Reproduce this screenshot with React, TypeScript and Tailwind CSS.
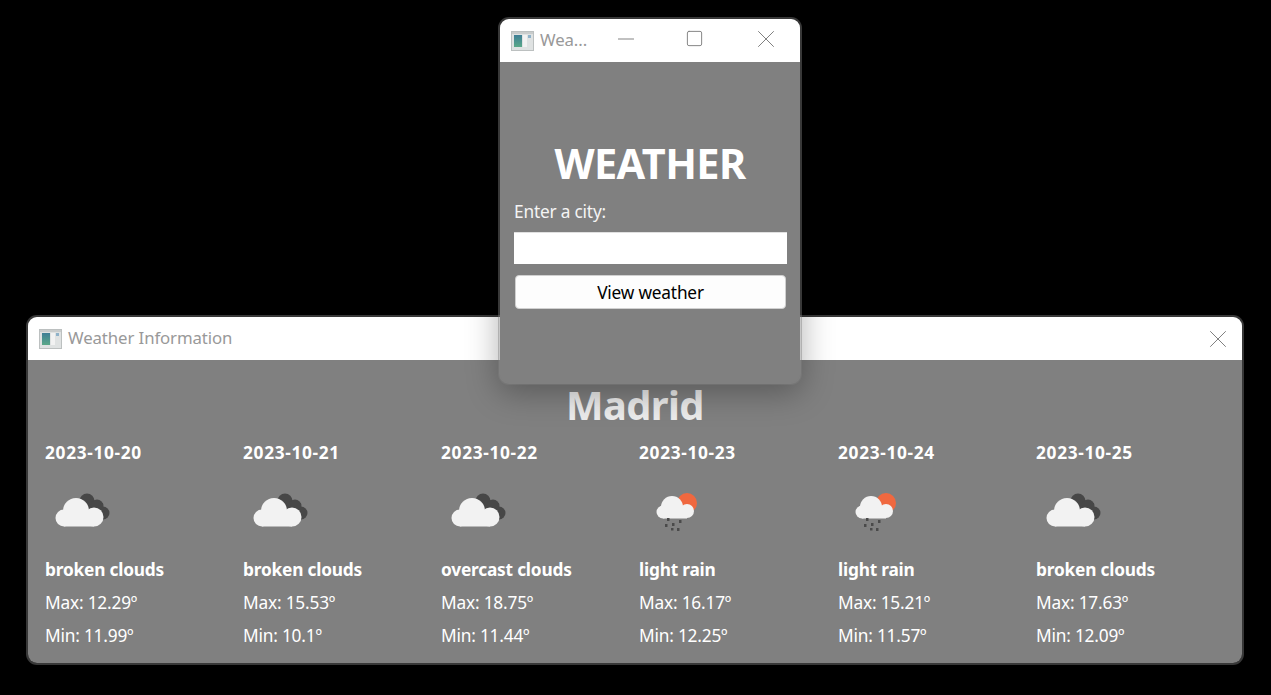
import { X, Minus, Square } from "lucide-react";

const days = [
  { date: "2023-10-20", desc: "broken clouds", max: "12.29", min: "11.99", icon: "clouds" },
  { date: "2023-10-21", desc: "broken clouds", max: "15.53", min: "10.1", icon: "clouds" },
  { date: "2023-10-22", desc: "overcast clouds", max: "18.75", min: "11.44", icon: "clouds" },
  { date: "2023-10-23", desc: "light rain", max: "16.17", min: "12.25", icon: "rain" },
  { date: "2023-10-24", desc: "light rain", max: "15.21", min: "11.57", icon: "rain" },
  { date: "2023-10-25", desc: "broken clouds", max: "17.63", min: "12.09", icon: "clouds" },
];

function AppIcon() {
  return (
    <svg width="23" height="20" viewBox="0 0 23 20" className="shrink-0 blur-[0.6px]">
      <defs>
        <linearGradient id="pane" x1="0" y1="0" x2="0" y2="1">
          <stop offset="0" stopColor="#3f7e96" />
          <stop offset="1" stopColor="#5aa888" />
        </linearGradient>
      </defs>
      <rect x="0.5" y="0.5" width="22" height="19" fill="#dfe2e2" stroke="#bcc0c0" />
      <rect x="1" y="1" width="21" height="2" fill="#c9cccc" />
      <rect x="3" y="4" width="8" height="12" fill="url(#pane)" />
      <rect x="12" y="4" width="4" height="12" fill="#f2f2f2" />
      <rect x="17" y="4" width="3" height="3" fill="#8fb2c9" />
    </svg>
  );
}

function CloudsIcon() {
  return (
    <svg width="56" height="40" viewBox="0 0 56 40" className="blur-[0.6px]">
      <g fill="#474747">
        <circle cx="32" cy="10" r="7.500" />
        <circle cx="42" cy="15" r="6.500" />
        <circle cx="48" cy="22" r="6.500" />
        <rect x="30" y="12" width="18" height="14" />
      </g>
      <g fill="#f2f2f2">
        <circle cx="21" cy="20" r="13" />
        <circle cx="9" cy="27" r="8.500" />
        <circle cx="39" cy="26" r="9.500" />
        <rect x="9" y="20" width="30" height="15.500" />
      </g>
    </svg>
  );
}

function RainIcon() {
  return (
    <svg width="44" height="40" viewBox="0 0 44 40" className="blur-[0.5px]">
      <circle cx="32" cy="12" r="10" fill="#f0683f" />
      <g fill="#f2f2f2">
        <circle cx="17" cy="16" r="11" />
        <circle cx="8" cy="21" r="6.500" />
        <circle cx="32" cy="20" r="7" />
        <rect x="8" y="16" width="24" height="11.500" />
      </g>
      <g fill="#4a4a4a">
        <rect x="12" y="27" width="2.500" height="3" />
        <rect x="10" y="33" width="2.500" height="3" />
        <rect x="17" y="32" width="2.500" height="3" />
        <rect x="24" y="29" width="2.500" height="3" />
        <rect x="22" y="37" width="2.500" height="3" />
        <rect x="16" y="37" width="2.500" height="2.500" />
      </g>
    </svg>
  );
}

function DayColumn({ day }: { day: (typeof days)[number] }) {
  return (
    <div className="flex flex-col text-white">
      <div className="text-[17.3px] font-bold leading-[22px] tracking-[0.68px]">{day.date}</div>
      {day.icon === "clouds" ? (
        <div className="h-[40px] mt-[27px] pl-[10px]">
          <CloudsIcon />
        </div>
      ) : (
        <div className="h-[40px] mt-[27px] pl-[16px]">
          <RainIcon />
        </div>
      )}
      <div className="mt-[28px] text-[17.3px] font-bold leading-[22px] tracking-[-0.2px]">{day.desc}</div>
      <div className="mt-[11px] text-[17.3px] leading-[22px] tracking-[-0.2px]">Max: {day.max}º</div>
      <div className="mt-[11px] text-[17.3px] leading-[22px] tracking-[-0.2px]">Min: {day.min}º</div>
    </div>
  );
}

export default function App() {
  return (
    <div className="relative w-[1271px] h-[695px] bg-black overflow-hidden font-['Noto_Sans','Open_Sans',sans-serif]">
      {/* info window */}
      <div className="absolute left-[26px] top-[315px] w-[1218px] h-[350px] flex flex-col rounded-[11px] border-2 border-[#80808070] bg-clip-padding overflow-hidden bg-[#808080]">
        <div className="h-[43px] bg-white flex items-center pl-[11px] pr-[9px] shrink-0">
          <AppIcon />
          <span className="ml-[6px] -mt-[2px] text-[16.8px] text-[#999999] tracking-[-0.1px]">Weather Information</span>
          <X size={30} strokeWidth={0.8} className="ml-auto text-[#808080]" />
        </div>
        <div className="flex-1 flex flex-col px-[17px]">
          <div className="mt-[20px] text-center text-[39.8px] font-bold leading-[50px] text-[#ececec] tracking-[-0.6px]">
            Madrid
          </div>
          <div className="grid grid-cols-[198px_198px_198px_199px_198px_1fr] mt-[12px]">
            {days.map((day) => (
              <DayColumn key={day.date} day={day} />
            ))}
          </div>
        </div>
      </div>

      {/* search window */}
      <div className="absolute left-[498px] top-[17px] w-[304px] h-[368px] flex flex-col rounded-[11px] border-2 border-[#80808070] bg-clip-padding overflow-hidden bg-[#808080] shadow-[0_8px_32px_rgba(0,0,0,0.3)]">
        <div className="h-[43px] bg-white flex items-center pl-[11px] shrink-0 relative">
          <AppIcon />
          <span className="ml-[6px] -mt-[2px] text-[16.8px] text-[#999999] tracking-[-0.1px]">Wea...</span>
          <Minus size={26} strokeWidth={0.9} className="absolute left-[113px] top-[7px] text-[#808080]" />
          <Square size={19} strokeWidth={1.200} className="absolute left-[185px] top-[10px] text-[#808080]" />
          <X size={30} strokeWidth={0.8} className="absolute left-[251px] top-[5px] text-[#808080]" />
        </div>
        <div className="flex-1 flex flex-col px-[14px] text-white">
          <div className="mt-[75px] text-center text-[41.5px] font-bold leading-[52px] tracking-[-0.6px]">WEATHER</div>
          <div className="mt-[12px] text-[17.3px] leading-[22px] text-[#f4f4f4] tracking-[-0.2px]">Enter a city:</div>
          <input className="mt-[9px] w-[273px] h-[32px] bg-white border-t border-[#e0e0e0] outline-none" />
          <button className="mt-[11px] ml-px w-[271px] h-[34px] pt-px bg-[#fdfdfd] border border-[#d0d0d0] rounded-[4px] text-black text-[17.3px] leading-[22px] tracking-[-0.2px]">
            View weather
          </button>
        </div>
      </div>
    </div>
  );
}
